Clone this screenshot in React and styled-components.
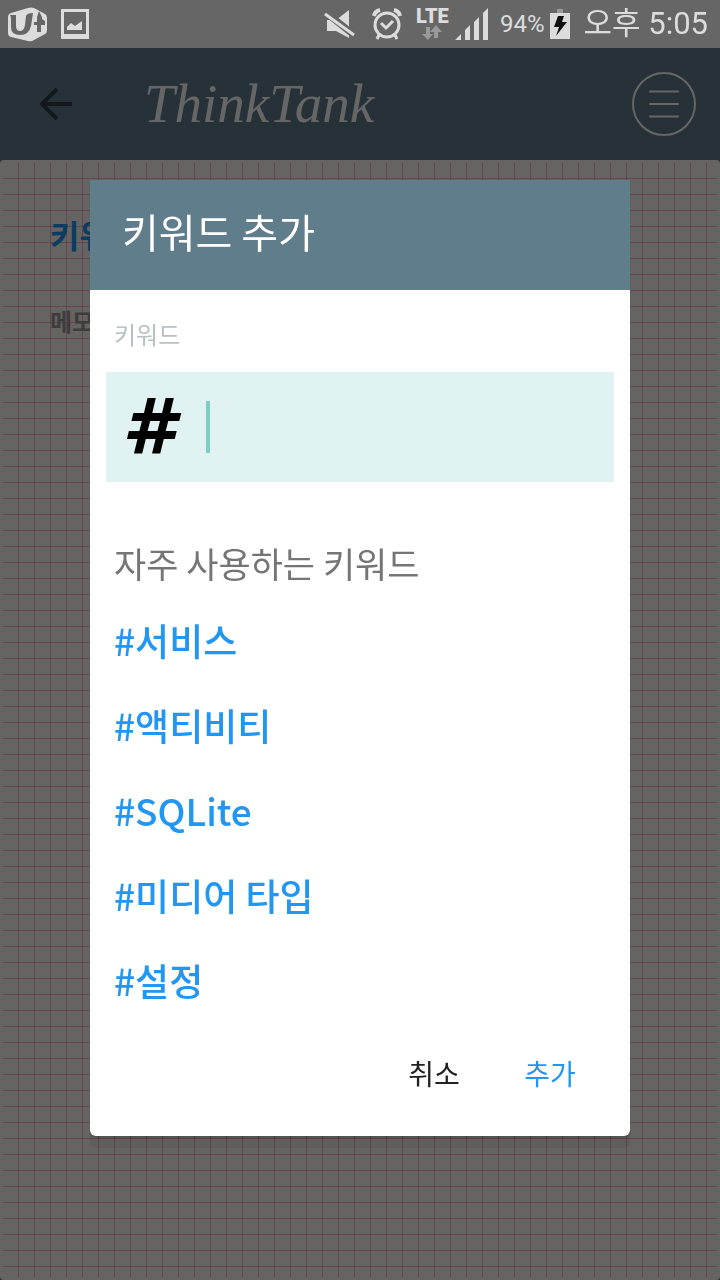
import React from "react";
import styled, { createGlobalStyle } from "styled-components";

const GlobalStyle = createGlobalStyle`
  *, *::before, *::after { box-sizing: border-box; }
  body {
    margin: 0;
    font-family: Roboto, "Noto Sans CJK KR", sans-serif;
  }
  button, input { font: inherit; }
  h1, h2, h3, p, ul { margin: 0; padding: 0; font-weight: 400; }
`;

const Screen = styled.div`
  min-height: 100vh;
  display: flex;
  flex-direction: column;
  background: #607d8b;
`;

const StatusBar = styled.header`
  position: relative;
  z-index: 3;
  height: 48px;
  padding: 0 12px 0 8px;
  display: flex;
  align-items: center;
  justify-content: space-between;
  background: #666666;
  color: #dcdcdc;
`;

const StatusGroup = styled.div`
  display: flex;
  align-items: center;
  gap: ${(p) => p.$gap}px;
`;

const Icon = styled.svg`
  display: block;
  flex: none;
`;

const Battery = styled.span`
  display: flex;
  align-items: center;
  gap: 6px;
  font-size: 24px;
  line-height: 48px;
`;

const Clock = styled.time`
  font-size: 31px;
  line-height: 52px;
  white-space: pre;
`;

const AppBar = styled.nav`
  height: 112px;
  padding: 0 24px 0 32px;
  display: flex;
  align-items: center;
`;

const IconButton = styled.button`
  display: flex;
  align-items: center;
  justify-content: center;
  padding: 0;
  border: 0;
  background: none;
  width: ${(p) => p.$width}px;
  height: 64px;
`;

const Logo = styled.h1`
  flex: 1;
  margin-left: 64px;
  font-family: "Liberation Serif", serif;
  font-style: italic;
  font-size: 55px;
  line-height: 64px;
  color: #ffffff;
`;

const Paper = styled.main`
  flex: 1;
  padding: 3px;
  display: flex;
  background: #fffbf6;
  border-radius: 4px;
`;

const Grid = styled.div`
  flex: 1;
  padding: 50px 47px;
  background-image:
    linear-gradient(to right, transparent 15px, rgba(240, 80, 130, 0.42) 15px),
    linear-gradient(to bottom, transparent 15px, rgba(240, 80, 130, 0.42) 15px);
  background-size: 16px 16px;
`;

const Heading = styled.h2`
  font-size: 32px;
  line-height: 48px;
  font-weight: 700;
  color: #2196f3;
`;

const Memo = styled.p`
  margin-top: 38px;
  font-size: 24px;
  line-height: 48px;
  font-weight: 700;
  color: #999999;
`;

const Scrim = styled.div`
  position: fixed;
  inset: 0;
  z-index: 2;
  padding-top: 180px;
  display: flex;
  justify-content: center;
  align-items: flex-start;
  background: rgba(0, 0, 0, 0.6);
`;

const Dialog = styled.form`
  width: 75%;
  font-family: "Noto Sans CJK KR", sans-serif;
  background: #ffffff;
  border-radius: 0 0 6px 6px;
  box-shadow: 0 12px 0 rgba(0, 0, 0, 0.07), 0 2px 2px rgba(0, 0, 0, 0.14);
`;

const Title = styled.h2`
  height: 110px;
  padding: 0 32px;
  font-size: 40px;
  line-height: 102px;
  color: #ffffff;
  background: #607d8b;
`;

const DialogBody = styled.div`
  padding: 16px;
`;

const Label = styled.label`
  display: block;
  padding: 0 8px;
  font-size: 24px;
  line-height: 56px;
  color: #b7c1c4;
`;

const Field = styled.div`
  height: 110px;
  margin-top: 10px;
  padding: 0 16px;
  display: flex;
  align-items: center;
  background: #e0f2f1;
`;

const Hash = styled.span`
  width: 84px;
  font-family: "DejaVu Sans", sans-serif;
  font-size: 76px;
  font-style: italic;
  font-weight: 700;
  line-height: 80px;
  color: #000000;
`;

const Caret = styled.span`
  width: 4px;
  height: 52px;
  background: #80cbc4;
`;

const TextInput = styled.input`
  flex: 1;
  min-width: 0;
  height: 80px;
  padding: 0;
  border: 0;
  outline: 0;
  background: transparent;
  font-size: 36px;
`;

const Subtitle = styled.h3`
  margin-top: 55px;
  padding: 0 8px;
  font-size: 35px;
  line-height: 52px;
  color: #757575;
`;

const Keywords = styled.ul`
  margin-top: 9px;
  padding: 0 8px;
  list-style: none;
`;

const Keyword = styled.button`
  display: block;
  height: 85px;
  padding: 0;
  border: 0;
  background: none;
  font-size: 37px;
  font-weight: 500;
  line-height: 85px;
  color: #2196f3;
`;

const Actions = styled.div`
  display: flex;
  justify-content: flex-end;
  gap: 32px;
  padding: 2px 38px 31px;
`;

const Action = styled.button`
  width: 84px;
  height: 64px;
  padding: 0;
  border: 0;
  background: none;
  font-size: 28px;
  line-height: 64px;
  color: ${(p) => (p.$primary ? "#2196f3" : "#212121")};
`;

const keywords = ["#서비스", "#액티비티", "#SQLite", "#미디어 타입", "#설정"];

function CarrierIcon() {
  return (
    <Icon width="39" height="35" viewBox="0 0 39 35" aria-hidden="true">
      <path d="M3 6 20 1Q23 0 26 1L37 7Q39 8 39 11V23Q39 26 37 27L26 33Q23 35 20 34L3 30Q0 29 0 26V10Q0 7 3 6Z" fill="#dcdcdc" />
      <path d="M2 8H8V19Q8 24 12 24Q16 24 17 18L18 9Q19 6 25 6L23 19Q21 28 12 28Q3 28 3 20V12Q3 9 2 8Z" fill="#666" />
      <path d="M31 4 34 10V12L37 14V18H33V25H29V18H26V15H29V10Z" fill="#666" />
    </Icon>
  );
}

function PictureIcon() {
  return (
    <Icon width="28" height="30" viewBox="0 0 28 30" aria-hidden="true">
      <path fillRule="evenodd" d="M0 0H28V30H0ZM3 3V25H25V3Z" fill="#dcdcdc" />
      <path d="M6 21V18L10 14 14 17 21 12V21Z" fill="#dcdcdc" />
    </Icon>
  );
}

function MuteIcon() {
  return (
    <Icon width="32" height="30" viewBox="0 0 32 30" aria-hidden="true">
      <path d="M3 11H12L25 1V29L12 22H3Z" fill="#dcdcdc" />
      <path d="M0 2 30 26" stroke="#666" strokeWidth="7" />
      <path d="M1 5 30 26" stroke="#dcdcdc" strokeWidth="3" />
    </Icon>
  );
}

function AlarmIcon() {
  return (
    <Icon width="30" height="32" viewBox="0 0 30 32" fill="none" stroke="#dcdcdc" aria-hidden="true">
      <circle cx="15" cy="17" r="12" strokeWidth="3" />
      <path d="M2 8Q3 3 8 2M28 8Q27 3 22 2" strokeWidth="4" />
      <path d="M7 27 5 31M23 27 25 31" strokeWidth="3" />
      <path d="M9 15 14 20 21 13" strokeWidth="3" />
    </Icon>
  );
}

const Network = styled.span`
  width: 33px;
  height: 34px;
  display: flex;
  flex-direction: column;
  align-items: center;
  font-family: Roboto, sans-serif;
  font-size: 20px;
  line-height: 18px;
  font-weight: 900;
`;

function DataArrows() {
  return (
    <Icon width="20" height="16" viewBox="0 0 20 16" fill="#999" aria-hidden="true">
      <path d="M4 2H8V9H11L6 15 0 9H4ZM12 13H16V7H20L14 0 8 7H12Z" />
    </Icon>
  );
}

function SignalIcon() {
  return (
    <Icon width="34" height="32" viewBox="0 0 34 32" fill="#dcdcdc" aria-hidden="true">
      <path d="M0 32 6 26V32ZM10 22 15 17V32H10ZM19 14 24 9V32H19ZM28 5 33 0V32H28Z" />
    </Icon>
  );
}

function BatteryIcon() {
  return (
    <Icon width="20" height="30" viewBox="0 0 20 30" aria-hidden="true">
      <path d="M7 0H13V4H7Z" fill="#999" />
      <path d="M0 4H20V30H0Z" fill="#dcdcdc" />
      <path d="M8 7H14L12 13H17L6 27 9 18H4Z" fill="#111" />
    </Icon>
  );
}

export default function App() {
  return (
    <Screen>
      <GlobalStyle />
      <StatusBar>
        <StatusGroup $gap={14}>
          <CarrierIcon />
          <PictureIcon />
        </StatusGroup>
        <StatusGroup $gap={13}>
          <StatusGroup $gap={11}>
            <StatusGroup $gap={6}>
              <StatusGroup $gap={14}>
                <StatusGroup $gap={16}>
                  <MuteIcon />
                  <AlarmIcon />
                </StatusGroup>
                <Network>
                  LTE
                  <DataArrows />
                </Network>
              </StatusGroup>
              <SignalIcon />
            </StatusGroup>
            <Battery>
              94%
              <BatteryIcon />
            </Battery>
          </StatusGroup>
          <Clock>오후 5:05</Clock>
        </StatusGroup>
      </StatusBar>

      <AppBar>
        <IconButton type="button" $width={48} aria-label="뒤로">
          <Icon width="32" height="32" viewBox="0 0 32 32" fill="none" stroke="#2d3e46" strokeWidth="4">
            <path d="M32 16H3M17 1 2 16 17 31" />
          </Icon>
        </IconButton>
        <Logo>ThinkTank</Logo>
        <IconButton type="button" $width={64} aria-label="메뉴">
          <Icon width="64" height="64" viewBox="0 0 64 64" fill="none" stroke="#fff" strokeWidth="2">
            <circle cx="32" cy="32" r="31" />
            <path d="M18 19.5H46M18 32H46M18 44.5H46" strokeLinecap="round" />
          </Icon>
        </IconButton>
      </AppBar>

      <Paper>
        <Grid>
          <Heading>키워드</Heading>
          <Memo>메모</Memo>
        </Grid>
      </Paper>

      <Scrim>
        <Dialog role="dialog" aria-labelledby="dialog-title" onSubmit={(e) => e.preventDefault()}>
          <Title id="dialog-title">키워드 추가</Title>
          <DialogBody>
            <Label htmlFor="keyword">키워드</Label>
            <Field>
              <Hash>#</Hash>
              <Caret />
              <TextInput id="keyword" type="text" />
            </Field>
            <Subtitle>자주 사용하는 키워드</Subtitle>
            <Keywords>
              {keywords.map((word) => (
                <li key={word}>
                  <Keyword type="button">{word}</Keyword>
                </li>
              ))}
            </Keywords>
          </DialogBody>
          <Actions>
            <Action type="button">취소</Action>
            <Action type="submit" $primary>추가</Action>
          </Actions>
        </Dialog>
      </Scrim>
    </Screen>
  );
}
